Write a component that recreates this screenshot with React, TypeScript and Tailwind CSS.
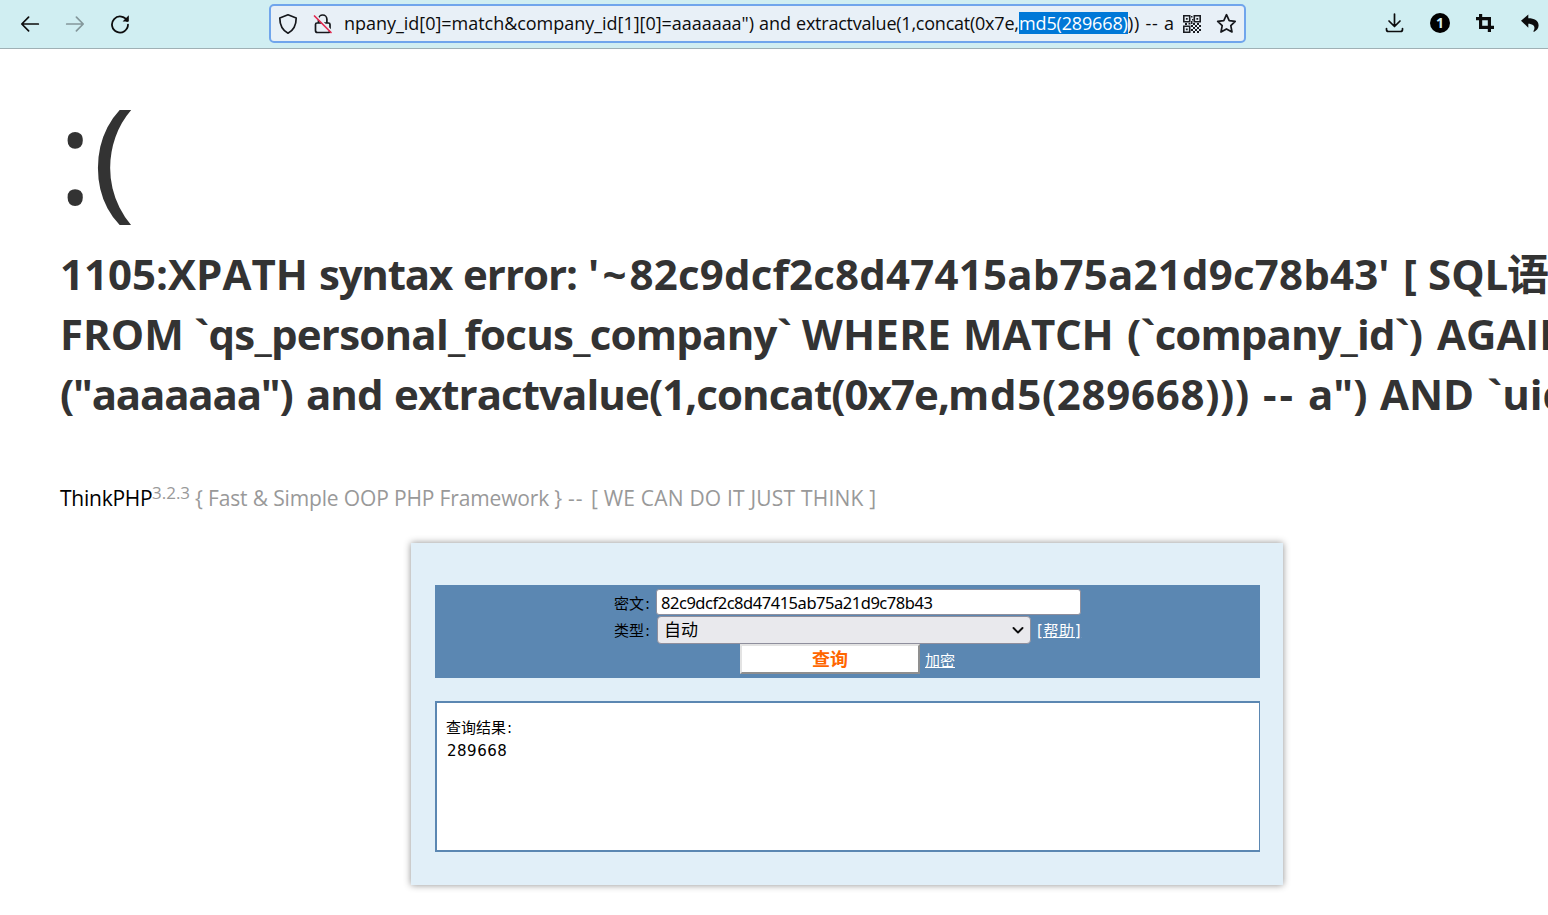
import React from "react";

function QrIcon() {
  return (
    <svg className="h-[18px] w-[18px]" viewBox="0 0 18 18" fill="#1b1d22">
      <path d="M.8.8h5.900v5.900H.8zM11.300.8h5.900v5.900h-5.900zM.8 11.300h5.900v5.900H.8z" fill="none" stroke="#1b1d22" strokeWidth="1.6" />
      <path d="M2.900 2.900h1.800v1.800H2.900zM13.400 2.900h1.800v1.800h-1.800zM2.900 13.400h1.800v1.800H2.900z" />
      <path d="M8 1h1.500v1.500H8zM9 4h1.500v1.500H9zM8 6h1.500v3H8zM2 8h2v2H2zM5.500 8h2v1.500h-2z" />
      <path d="M10 8h2v2h-2zM14 8h2v2h-2zM8 10h2v2H8zM12 10h2v2h-2zM16 10h2v2h-2zM10 12h2v2h-2zM14 12h2v2h-2zM8 14h2v2H8zM12 14h2v2h-2zM16 14h2v2h-2zM10 16h2v2h-2zM14 16h2v2h-2z" />
    </svg>
  );
}

function Toolbar() {
  return (
    <header className="flex h-[49px] w-full items-start overflow-hidden border-b border-[#9fb0b5] bg-[#d0eef2]">
      <div className="flex h-12 w-[269px] shrink-0 items-center pl-[20px]">
        <svg className="h-5 w-5" viewBox="0 0 20 20" fill="none" stroke="#0c0c0d" strokeWidth="1.7" strokeLinecap="round" strokeLinejoin="round">
          <path d="M18.3 10H2M8.6 3.2 1.8 10l6.8 6.8" />
        </svg>
        <svg className="ml-[25px] h-5 w-5" viewBox="0 0 20 20" fill="none" stroke="#84979b" strokeWidth="1.7" strokeLinecap="round" strokeLinejoin="round">
          <path d="M1.7 10H18M11.4 3.2l6.8 6.8-6.8 6.8" />
        </svg>
        <svg className="ml-[25px] h-5 w-5" viewBox="0 0 20 20" fill="none">
          <path d="M17.2 7A8 8 0 1 0 18 10.6" stroke="#0c0c0d" strokeWidth="1.8" strokeLinecap="round" />
          <path d="M18.8 1.2v6.2h-6.2z" fill="#0c0c0d" />
        </svg>
      </div>
      <div className="mt-1 flex h-[39px] w-[977px] shrink-0 items-center rounded-[5px] border-2 border-[#70a5ec] bg-[#e8f0f7] pl-[7px]">
        <svg className="h-[22px] w-5 shrink-0" viewBox="0 0 20 22" fill="none" stroke="#15171c" strokeWidth="1.7" strokeLinejoin="round">
          <path d="M10 1.8 18.2 5c0 7-2.6 12.3-8.2 15.2C4.4 17.3 1.8 12 1.8 5z" />
        </svg>
        <svg className="ml-[15px] h-[22px] w-5 shrink-0" viewBox="0 0 20 22" fill="none" strokeLinecap="round">
          <path d="M5.5 10V6.2a4.2 4.2 0 0 1 8.4 0V10M4 10h11.5a1.5 1.5 0 0 1 1.5 1.5v6a2 2 0 0 1-2 2H4.5a2 2 0 0 1-2-2v-6A1.5 1.5 0 0 1 4 10z" stroke="#15171c" strokeWidth="1.7" />
          <path d="M2.5 2.2 18.8 18.5" stroke="#e8f0f7" strokeWidth="2" />
          <path d="M1.5 3 18 19.5" stroke="#e22850" strokeWidth="1.7" />
        </svg>
        <div className="mb-px ml-[11px] flex w-[831px] shrink-0 items-center whitespace-pre font-['Open_Sans'] text-[18px] leading-[22px] text-[#0c0c0d]">
          <span className="w-[407px] tracking-[-0.03px]">{'npany_id[0]=match&company_id[1][0]=aaaaaaa")'}</span>
          <span className="w-[37px] pl-[8px]">and</span>
          <span className="w-[231px] pl-[8px] tracking-[-0.23px]">extractvalue(1,concat(0x7e,</span>
          <span className="w-[109px] bg-[#0078d7] tracking-[-0.15px] text-white">md5(289668)</span>
          <span className="tracking-[0.75px]">{")) -- a"}</span>
        </div>
        <div className="ml-[8px] flex shrink-0 items-center gap-[13px]">
          <QrIcon />
          <svg className="h-[22px] w-[22px]" viewBox="0 0 22 22" fill="none" stroke="#15171c" strokeWidth="1.7" strokeLinejoin="round">
            <path d="m12.500 1.700 2.700 5.900 6 .7-4.400 4.400 1.200 6.300-5.500-3.100-5.500 3.100 1.200-6.300-4.500-4.400 6.100-.7z" />
          </svg>
        </div>
      </div>
      <div className="flex h-[46px] shrink-0 items-center pl-[139px]">
        <svg className="h-5 w-5" viewBox="0 0 20 20" fill="none" stroke="#0c0c0d" strokeWidth="1.7" strokeLinecap="round" strokeLinejoin="round">
          <path d="M9.5 1v12M4 8l5.500 5.500L15 8M1.500 15.500v1a2 2 0 0 0 2 2h12a2 2 0 0 0 2-2v-1" />
        </svg>
        <span className="ml-[25px] flex h-5 w-5 items-center justify-center rounded-full bg-black font-['Open_Sans'] text-[14px] font-bold leading-5 text-[#d0eef2]">1</span>
        <svg className="ml-[26px] h-[18px] w-[18px]" viewBox="0 0 18 18" fill="none" stroke="#0c0c0d" strokeWidth="3.2">
          <path d="M4.6 0v13.4H18M0 4.6h13.4V18" />
        </svg>
        <svg className="ml-[27px] h-[18px] w-[18px]" viewBox="0 0 18 18" fill="#0c0c0d">
          <path d="M0 6.7 7.3.6v3.7c6 0 10.300 2.300 10.300 7.300 0 2.900-1.900 4.900-4.300 6.100-.7.300-1.100-.1-.8-.6 2.400-4.100.2-7.100-5.200-7.300v4z" />
        </svg>
      </div>
    </header>
  );
}

function ErrorPage() {
  return (
    <main className="h-[494px] w-[1548px] overflow-hidden whitespace-pre pl-[60px] font-['Open_Sans','Noto_Sans_CJK_SC',sans-serif] text-[#333]">
      <p className="mt-[34px] flex h-[140px] text-[131px] leading-[140px]">
        <span className="-ml-[2px] w-[34px]">:</span>
        <span className="origin-left scale-x-[1.13]">(</span>
      </p>
      <h1 className="mt-[21px] w-[1600px] text-[42px] font-bold leading-[60px]">
        <span className="flex">
          <span className="w-[259px]">1105:XPATH</span>
          <span className="w-[144px] tracking-[-1.2px]">syntax</span>
          <span className="w-[125px] tracking-[-1px]">error:</span>
          <span className="w-[815px] tracking-[0.2px]"><span className="tracking-[3.2px]">'~</span>82c9dcf2c8d47415ab75a21d9c78b43'</span>
          <span className="w-[25px]">[</span>
          <span className="w-[79px]">SQL</span>
          <span>语句</span>
        </span>
        <span className="flex">
          <span className="w-[134px]">FROM</span>
          <span className="w-[608px] tracking-[-0.75px]">`qs_personal_focus_company`</span>
          <span className="w-[161px] tracking-[0.3px]">WHERE</span>
          <span className="w-[164px] tracking-[-0.3px]">MATCH</span>
          <span className="w-[310px] tracking-[-0.9px]">(`company_id`)</span>
          <span>AGAINST</span>
        </span>
        <span className="flex">
          <span className="w-[246px] tracking-[-1.2px]">("aaaaaaa")</span>
          <span className="w-[88px] tracking-[-1px]">and</span>
          <span className="w-[554px] tracking-[-0.93px]">extractvalue(1,concat(0x7e,</span>
          <span className="w-[315px] tracking-[0.7px]">md5(289668)))</span>
          <span className="w-[45px] tracking-[3px]">--</span>
          <span className="w-[72px]">a")</span>
          <span className="w-[107px]">AND</span>
          <span>`uid`</span>
        </span>
      </h1>
      <p className="mt-[59px] flex h-[30px] items-center text-[21px] leading-[30px] text-[#999]">
        <span className="w-[92px] tracking-[-0.25px] text-black">ThinkPHP</span>
        <span className="w-[38px] pb-[10px] text-[17px]">3.2.3</span>
        <span className="w-[378px] pl-[5px] tracking-[-0.15px]">{"{ Fast & Simple OOP PHP Framework }"}</span>
        <span className="w-[23px] tracking-[1px]">--</span>
        <span className="tracking-[0.2px]">[ WE CAN DO IT JUST THINK ]</span>
      </p>
    </main>
  );
}

function DecryptPanel() {
  return (
    <section className="ml-[411px] h-[342px] w-[872px] bg-[#e1eff8] px-6 pt-[42px] font-['DejaVu_Sans','Noto_Sans_CJK_SC',sans-serif] text-[15px] text-black shadow-[0_0_7px_rgba(0,0,0,0.45)]">
      <form className="h-[93px] w-[825px] bg-[#5b87b2] pt-1">
        <div className="flex h-[27px] pl-[179px]">
          <span className="w-[42px] pt-[4px] leading-[22px]">密文<span className="pl-px">:</span></span>
          <div className="h-[26px] w-[425px] rounded-[3px] border border-[#8f8f9d] bg-white pl-[4px] font-['Noto_Sans'] text-[16.5px] leading-[26px] tracking-[-0.47px]">82c9dcf2c8d47415ab75a21d9c78b43</div>
        </div>
        <div className="flex h-[28px] pl-[179px]">
          <span className="w-[43px] pt-[4px] leading-[22px]">类型<span className="pl-px">:</span></span>
          <div className="flex h-[28px] w-[374px] items-center justify-between rounded-[4px] border border-[#8f8f9d] bg-[#e9e9ed] pl-[6px] pr-[6px] text-[17px] leading-[26px]">
            <span>自动</span>
            <svg className="h-3 w-3" viewBox="0 0 12 12" fill="none" stroke="#0c0c0d" strokeWidth="1.9" strokeLinecap="round" strokeLinejoin="round">
              <path d="m1.500 4 4.500 4.500L10.500 4" />
            </svg>
          </div>
          <span className="ml-[6px] pt-[4px] leading-[22px] tracking-[0.6px] text-white underline">[帮助]</span>
        </div>
        <div className="flex h-[31px] pl-[305px]">
          <div className="h-[30px] w-[180px] border-2 border-b-[#8f8f8f] border-l-[#e3e3e3] border-r-[#8f8f8f] border-t-[#e3e3e3] bg-white text-center text-[18px] font-bold leading-[27px] text-[#ff6600]">查询</div>
          <span className="ml-[5px] pt-[6px] leading-[22px] text-white underline">加密</span>
        </div>
      </form>
      <div className="mt-[23px] h-[151px] w-[825px] border-2 border-r border-[#5b87b2] bg-white pl-[9px] pt-[14px] leading-[23px]">
        <p>查询结果<span className="pl-px">:</span></p>
        <p className="pl-px tracking-[0.5px]">289668</p>
      </div>
    </section>
  );
}

export default function App() {
  return (
    <div className="h-[915px] w-full overflow-hidden bg-white">
      <Toolbar />
      <ErrorPage />
      <DecryptPanel />
    </div>
  );
}
